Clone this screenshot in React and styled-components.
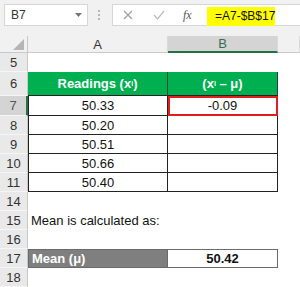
import styled, { createGlobalStyle } from "styled-components";

const Global = createGlobalStyle`
  body {
    margin: 0;
    background: #ffffff;
    font-family: "Liberation Sans", Arial, sans-serif;
  }
`;

const Sheet = styled.div`
  width: 300px;
  height: 287px;
  overflow: hidden;
  background: #ffffff;
`;

const Toolbar = styled.div`
  display: flex;
  align-items: center;
  height: 36px;
  padding: 0 0 6px 4px;
  box-sizing: border-box;
  background: #f1f1f1;
`;

const NameBox = styled.div`
  display: flex;
  align-items: center;
  justify-content: space-between;
  width: 84px;
  height: 22px;
  box-sizing: border-box;
  padding: 0 5px 0 6px;
  background: #ffffff;
  border: 1px solid #d6d6d6;
  font-size: 12px;
  color: #333;
`;

const Dots = styled.div`
  display: flex;
  flex-direction: column;
  gap: 2px;
  margin: 0 12px 0 10px;
  & span {
    width: 2px;
    height: 2px;
    background: #b8b8b8;
  }
`;

const FormulaBox = styled.div`
  flex: 1;
  display: flex;
  align-items: center;
  height: 22px;
  box-sizing: border-box;
  background: #ffffff;
  border: 1px solid #d6d6d6;
  border-right: none;
  padding-left: 10px;
`;

const IconSlot = styled.div`
  width: ${(p) => p.$w}px;
  display: flex;
  align-items: center;
`;

const Fx = styled.span`
  font-family: "Liberation Serif", "Times New Roman", serif;
  font-style: italic;
  font-size: 12px;
  color: #555;
`;

const Formula = styled.div`
  display: flex;
  align-items: center;
  height: 19px;
  margin-top: 2px;
  width: 68px;
  padding-left: 8px;
  box-sizing: border-box;
  background: #ffff00;
  font-size: 12px;
  color: #111;
`;

const Row = styled.div`
  display: grid;
  grid-template-columns: 28px 140px 110px 1fr;
  height: ${(p) => p.$h}px;
`;

const ColHead = styled.div`
  display: flex;
  align-items: center;
  justify-content: center;
  box-sizing: border-box;
  background: ${(p) => (p.$active ? "#d4d4d4" : "#f1f1f1")};
  border-right: 1px solid #dadada;
  border-bottom: ${(p) => (p.$active ? "2px solid #217346" : "1px solid #c8c8c8")};
  font-size: 13px;
  color: ${(p) => (p.$active ? "#3b6b52" : "#333")};
`;

const Corner = styled.div`
  display: flex;
  align-items: flex-end;
  justify-content: flex-end;
  padding: 0 3px 2px 0;
  box-sizing: border-box;
  background: #f1f1f1;
  border-right: 1px solid #c8c8c8;
  border-bottom: 1px solid #c8c8c8;
`;

const RowHead = styled.div`
  display: flex;
  align-items: center;
  justify-content: center;
  box-sizing: border-box;
  background: ${(p) => (p.$active ? "#d4d4d4" : "#e9e9e9")};
  border-right: ${(p) => (p.$active ? "2px solid #217346" : "1px solid #c8c8c8")};
  border-bottom: 1px solid #f6f6f6;
  font-size: 13px;
  color: ${(p) => (p.$active ? "#555" : "#333")};
`;

const Cell = styled.div`
  display: flex;
  align-items: center;
  justify-content: ${(p) => (p.$left ? "flex-start" : "center")};
  padding-left: ${(p) => (p.$left ? "3px" : "0")};
  box-sizing: border-box;
  white-space: nowrap;
  font-size: 13px;
  color: #111;
`;

const TableCell = styled(Cell)`
  border-bottom: 1px solid #222;
  border-right: 1px solid #222;
  border-left: ${(p) => (p.$first ? "1px solid #222" : "none")};
  ${(p) =>
    p.$selected &&
    `
    outline: 2px solid #e11d1d;
    outline-offset: -2px;
  `}
`;

const GreenCell = styled(Cell)`
  background: #00b050;
  color: #ffffff;
  font-weight: bold;
  border-right: 1px solid #1d4a2f;
  border-bottom: 1px solid #222;
  & sub {
    font-size: 7px;
    vertical-align: -1px;
  }
`;

const MeanLabel = styled(Cell)`
  background: #7f7f7f;
  color: #ffffff;
  font-weight: bold;
  border: 1px solid #6a6a6a;
`;

const MeanValue = styled(Cell)`
  font-weight: bold;
  border: 1px solid #6a6a6a;
  border-left: none;
`;

const readings = ["50.33", "50.20", "50.51", "50.66", "50.40"];

function App() {
  return (
    <Sheet>
      <Global />
      <Toolbar>
        <NameBox>
          <span>B7</span>
          <svg width="7" height="4" viewBox="0 0 7 4">
            <path d="M0 0 L7 0 L3.5 4 Z" fill="#777" />
          </svg>
        </NameBox>
        <Dots>
          <span />
          <span />
          <span />
        </Dots>
        <FormulaBox>
          <IconSlot $w={30}>
            <svg width="10" height="10" viewBox="0 0 10 10">
              <path d="M1 1 L9 9 M9 1 L1 9" stroke="#a0a0a0" strokeWidth="1.2" />
            </svg>
          </IconSlot>
          <IconSlot $w={30}>
            <svg width="12" height="10" viewBox="0 0 12 10">
              <path d="M1 5 L4.5 9 L11 1" stroke="#bcbcbc" strokeWidth="1.2" fill="none" />
            </svg>
          </IconSlot>
          <IconSlot $w={24}>
            <Fx>fx</Fx>
          </IconSlot>
          <Formula>=A7-$B$17</Formula>
        </FormulaBox>
      </Toolbar>

      <Row $h={17}>
        <Corner>
          <svg width="11" height="11" viewBox="0 0 11 11">
            <path d="M11 0 L11 11 L0 11 Z" fill="#b5b5b5" />
          </svg>
        </Corner>
        <ColHead>A</ColHead>
        <ColHead $active>B</ColHead>
        <ColHead />
      </Row>

      <Row $h={19}>
        <RowHead>5</RowHead>
        <Cell />
        <Cell />
        <Cell />
      </Row>

      <Row $h={24}>
        <RowHead>6</RowHead>
        <GreenCell>
          Readings (x<sub>i</sub>)
        </GreenCell>
        <GreenCell>
          (x<sub>i</sub>&nbsp;– μ)
        </GreenCell>
        <Cell />
      </Row>

      {readings.map((value, i) => (
        <Row $h={i === 0 ? 20 : 19} key={value}>
          <RowHead $active={i === 0}>{i + 7}</RowHead>
          <TableCell $first>{value}</TableCell>
          <TableCell $selected={i === 0}>{i === 0 ? "-0.09" : ""}</TableCell>
          <Cell />
        </Row>
      ))}

      <Row $h={19}>
        <RowHead>14</RowHead>
        <Cell />
        <Cell />
        <Cell />
      </Row>
      <Row $h={19}>
        <RowHead>15</RowHead>
        <Cell $left>Mean is calculated as:</Cell>
        <Cell />
        <Cell />
      </Row>
      <Row $h={19}>
        <RowHead>16</RowHead>
        <Cell />
        <Cell />
        <Cell />
      </Row>
      <Row $h={19}>
        <RowHead>17</RowHead>
        <MeanLabel $left>Mean (μ)</MeanLabel>
        <MeanValue>50.42</MeanValue>
        <Cell />
      </Row>
      <Row $h={19}>
        <RowHead>18</RowHead>
        <Cell />
        <Cell />
        <Cell />
      </Row>
    </Sheet>
  );
}

export default App;
